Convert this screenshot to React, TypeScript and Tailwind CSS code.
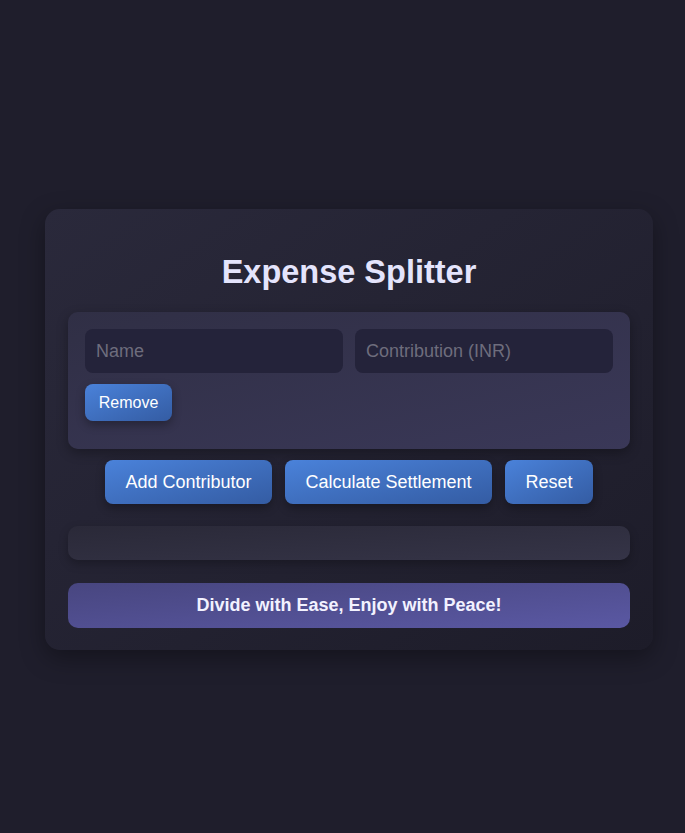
import React, { useState } from 'react';

interface Contributor {
  id: number;
  name: string;
  amount: string;
}

export default function App() {
  const [contributors, setContributors] = useState<Contributor[]>([{ id: 1, name: '', amount: '' }]);

  const btn =
    'rounded-lg bg-gradient-to-br from-[#4a82da] to-[#345ca3] text-white shadow-[0_4px_10px_rgba(0,0,0,0.3)]';

  return (
    <div className="min-h-screen bg-[#1f1e2c] pl-[45px] pt-[209px] font-['Liberation_Sans',Arial,sans-serif]">
      <div className="w-[608px] h-[441px] rounded-[15px] bg-gradient-to-br from-[#2a293b] to-[#1d1c29] px-[23px] pt-[44px] shadow-[0_8px_24px_rgba(0,0,0,0.35)]">
        <h1 className="text-[32.5px] leading-[38px] font-bold text-center text-[#e4e4fc] mb-[21px]">Expense Splitter</h1>

        {/* Contributors */}
        <div className="rounded-[10px] bg-gradient-to-br from-[#302f45] to-[#3a3858] p-[17px] pb-[28px] shadow-[0_4px_12px_rgba(0,0,0,0.3)]">
          {contributors.map((c) => (
            <div key={c.id}>
              <div className="flex gap-3">
                <input
                  className="w-[258px] h-[44px] rounded-lg bg-[#24233a] px-[11px] text-[18px] text-white placeholder-[#6e6d7d] outline-none"
                  placeholder="Name"
                  defaultValue={c.name}
                />
                <input
                  className="w-[258px] h-[44px] rounded-lg bg-[#24233a] px-[11px] text-[18px] text-white placeholder-[#6e6d7d] outline-none"
                  placeholder="Contribution (INR)"
                  defaultValue={c.amount}
                />
              </div>
              <button
                className={`${btn} mt-[11px] h-[37px] w-[87px] text-[16px]`}
                onClick={() => setContributors(contributors.filter((x) => x.id !== c.id))}
              >
                Remove
              </button>
            </div>
          ))}
        </div>

        {/* Actions */}
        <div className="flex justify-center gap-[13px] mt-[11px]">
          <button
            className={`${btn} h-[44px] w-[167px] text-[18px]`}
            onClick={() => setContributors([...contributors, { id: Date.now(), name: '', amount: '' }])}
          >
            Add Contributor
          </button>
          <button className={`${btn} h-[44px] w-[207px] text-[18px]`}>Calculate Settlement</button>
          <button
            className={`${btn} h-[44px] w-[88px] text-[18px]`}
            onClick={() => setContributors([{ id: 1, name: '', amount: '' }])}
          >
            Reset
          </button>
        </div>

        {/* Results */}
        <div className="mt-[22px] h-[34px] rounded-[10px] bg-gradient-to-br from-[#2a2938] to-[#353447] shadow-[0_4px_10px_rgba(0,0,0,0.25)]" />

        {/* Footer */}
        <div className="mt-[23px] h-[45px] rounded-[10px] bg-gradient-to-br from-[#484680] to-[#5a58a3] flex items-center justify-center text-[18px] font-bold text-[#f2f2ff]">
          Divide with Ease, Enjoy with Peace!
        </div>
      </div>
    </div>
  );
}
